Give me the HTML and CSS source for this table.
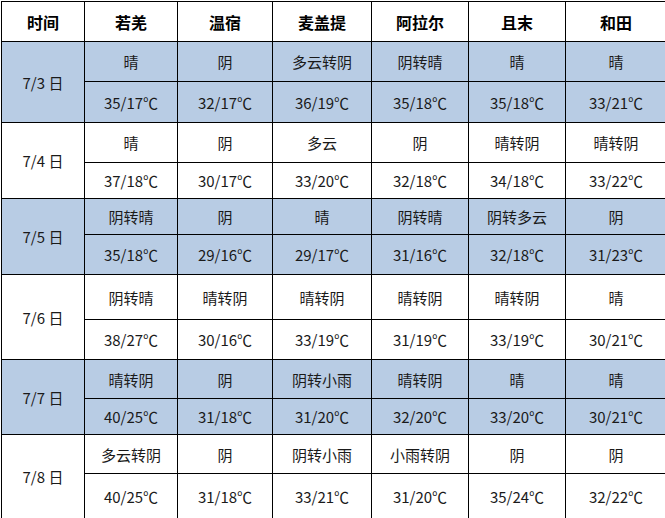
FILE: index.html
```html
<!DOCTYPE html>
<html lang="zh">
<head>
<meta charset="utf-8">
<link rel="stylesheet" href="styles.css">
</head>
<body>
<div class="sheet">
  <div class="h">时间</div><div class="h">若羌</div><div class="h">温宿</div><div class="h">麦盖提</div><div class="h">阿拉尔</div><div class="h">且末</div><div class="h">和田</div>

  <div class="d b span">7/3 日</div>
  <div class="b">晴</div><div class="b">阴</div><div class="b">多云转阴</div><div class="b">阴转晴</div><div class="b">晴</div><div class="b">晴</div>
  <div class="b">35/17℃</div><div class="b">32/17℃</div><div class="b">36/19℃</div><div class="b">35/18℃</div><div class="b">35/18℃</div><div class="b">33/21℃</div>

  <div class="d span">7/4 日</div>
  <div>晴</div><div>阴</div><div>多云</div><div>阴</div><div>晴转阴</div><div>晴转阴</div>
  <div>37/18℃</div><div>30/17℃</div><div>33/20℃</div><div>32/18℃</div><div>34/18℃</div><div>33/22℃</div>

  <div class="d b span">7/5 日</div>
  <div class="b">阴转晴</div><div class="b">阴</div><div class="b">晴</div><div class="b">阴转晴</div><div class="b">阴转多云</div><div class="b">阴</div>
  <div class="b">35/18℃</div><div class="b">29/16℃</div><div class="b">29/17℃</div><div class="b">31/16℃</div><div class="b">32/18℃</div><div class="b">31/23℃</div>

  <div class="d span">7/6 日</div>
  <div>阴转晴</div><div>晴转阴</div><div>晴转阴</div><div>晴转阴</div><div>晴转阴</div><div>晴</div>
  <div>38/27℃</div><div>30/16℃</div><div>33/19℃</div><div>31/19℃</div><div>33/19℃</div><div>30/21℃</div>

  <div class="d b span">7/7 日</div>
  <div class="b">晴转阴</div><div class="b">阴</div><div class="b">阴转小雨</div><div class="b">晴转阴</div><div class="b">晴</div><div class="b">晴</div>
  <div class="b">40/25℃</div><div class="b">31/18℃</div><div class="b">31/20℃</div><div class="b">32/20℃</div><div class="b">33/20℃</div><div class="b">30/21℃</div>

  <div class="d span">7/8 日</div>
  <div>多云转阴</div><div>阴</div><div>阴转小雨</div><div>小雨转阴</div><div>阴</div><div>阴</div>
  <div>40/25℃</div><div>31/18℃</div><div>33/21℃</div><div>31/20℃</div><div>35/24℃</div><div>32/22℃</div>
</div>
</body>
</html>
```

FILE: styles.css
```css
html, body {
  margin: 0;
  padding: 0;
  background: #fff;
}
body {
  padding: 1px 0 0 1px;
  overflow: hidden;
  width: 665px;
  height: 518px;
  box-sizing: border-box;
}
.sheet {
  display: grid;
  grid-template-columns: 82px 92px 94px 98px 96px 96px 100px;
  grid-template-rows: 39px 39px 40px 39px 35px 35px 39px 44px 39px 38px 35px 38px 44px;
  gap: 1px;
  padding: 1px;
  background: #000;
  width: max-content;
  font-family: "Noto Sans CJK SC", sans-serif;
  font-size: 15px;
  color: #1a1a1a;
}
.sheet > div {
  background: #fff;
  display: flex;
  align-items: center;
  justify-content: center;
  line-height: 1;
  white-space: nowrap;
}
.sheet > .b {
  background: #b8cce4;
}
.sheet > .h {
  font-size: 16px;
  font-weight: bold;
  color: #000;
}
.sheet > .span {
  grid-row: span 2;
}
```
